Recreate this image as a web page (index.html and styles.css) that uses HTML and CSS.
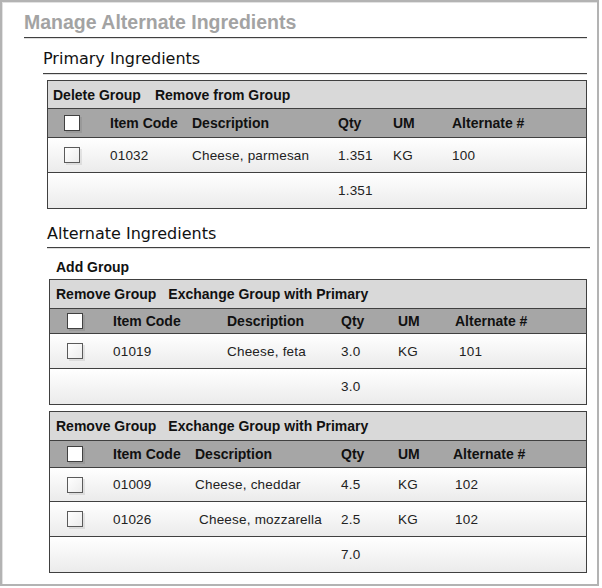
FILE: index.html
```html
<!DOCTYPE html>
<html lang="en">
<head>
  <meta charset="UTF-8">
  <meta name="viewport" content="width=device-width, initial-scale=1.0">
  <title>Manage Alternate Ingredients</title>
  <link rel="stylesheet" href="styles.css">
</head>
<body>
  <div class="frame">
    <h1 class="page-title">Manage Alternate Ingredients</h1>

    <!-- primary group -->
    <section class="primary">
      <h2 class="section-title">Primary Ingredients</h2>
      <div class="group group-primary">
        <div class="toolbar"><span>Delete Group</span><span>Remove from Group</span></div>
        <div class="row head">
          <span class="check"></span><span>Item Code</span><span>Description</span><span>Qty</span><span>UM</span><span>Alternate #</span>
        </div>
        <div class="row item">
          <span class="check"></span><span>01032</span><span>Cheese, parmesan</span><span>1.351</span><span>KG</span><span>100</span>
        </div>
        <div class="row total">
          <span></span><span></span><span></span><span>1.351</span>
        </div>
      </div>
    </section>

    <!-- alternate groups -->
    <section class="alternate">
      <h2 class="section-title">Alternate Ingredients</h2>
      <div class="add-group">Add Group</div>

      <div class="group group-b">
        <div class="toolbar"><span>Remove Group</span><span>Exchange Group with Primary</span></div>
        <div class="row head">
          <span class="check"></span><span>Item Code</span><span>Description</span><span>Qty</span><span>UM</span><span>Alternate #</span>
        </div>
        <div class="row item">
          <span class="check"></span><span>01019</span><span>Cheese, feta</span><span>3.0</span><span>KG</span><span class="nudge">101</span>
        </div>
        <div class="row total">
          <span></span><span></span><span></span><span>3.0</span>
        </div>
      </div>

      <div class="group group-c">
        <div class="toolbar"><span>Remove Group</span><span>Exchange Group with Primary</span></div>
        <div class="row head">
          <span class="check"></span><span>Item Code</span><span>Description</span><span>Qty</span><span>UM</span><span>Alternate #</span>
        </div>
        <div class="row item short">
          <span class="check"></span><span>01009</span><span>Cheese, cheddar</span><span>4.5</span><span>KG</span><span class="nudge-sm">102</span>
        </div>
        <div class="row item">
          <span class="check"></span><span>01026</span><span class="nudge">Cheese, mozzarella</span><span>2.5</span><span>KG</span><span class="nudge-sm">102</span>
        </div>
        <div class="row total">
          <span></span><span></span><span></span><span>7.0</span>
        </div>
      </div>
    </section>
  </div>
</body>
</html>
```

FILE: styles.css
```css
body {
  margin: 0;
  font-family: "Liberation Sans", Arial, sans-serif;
  color: #222;
  background-color: #fff;
}
.frame {
  width: 599px;
  height: 586px;
  box-sizing: border-box;
  border: 2px solid #b3b3b3;
  box-shadow: inset 1px 1px 0 #e2e2e2;
  padding-top: 8px;
}
.page-title {
  margin: 0 10px 0 22px;
  padding-bottom: 3px;
  font-size: 19.5px;
  line-height: 24px;
  font-weight: bold;
  color: #a3a3a3;
  border-bottom: 1px solid #404040;
  box-shadow: 0 1px 0 #dedede;
}
.section-title {
  margin: 0;
  font-family: "DejaVu Sans", sans-serif;
  font-size: 16px;
  line-height: 20px;
  font-weight: normal;
  color: #111;
  border-bottom: 1px solid #404040;
  box-shadow: 0 1px 0 #dedede;
}
.primary {
  margin: 11px 10px 0 41px;
}
.primary .section-title {
  padding-bottom: 4px;
}
.alternate {
  margin: 15px 7px 0 45px;
}
.alternate .section-title {
  padding-bottom: 3px;
}
.add-group {
  margin-top: 11px;
  padding-left: 9px;
  font-size: 14px;
  line-height: 16px;
  font-weight: bold;
  color: #111;
}
.group {
  border: 1px solid #404040;
}
.group-primary {
  margin: 6px 0 0 4px;
}
.group-b {
  margin: 4px 3px 0 2px;
}
.group-c {
  margin: 6px 3px 0 2px;
}
.toolbar {
  display: flex;
  align-items: center;
  gap: 12px;
  height: 28px;
  padding-left: 6px;
  background-color: #d9d9d9;
  border-bottom: 1px solid #404040;
  font-size: 14px;
  font-weight: bold;
  color: #111;
}
.group-primary .toolbar {
  gap: 14px;
  height: 27px;
  padding-left: 5px;
}
.row {
  display: grid;
  align-items: center;
  padding-left: 17px;
  border-bottom: 1px solid #404040;
}
.row:last-child {
  border-bottom: none;
}
.group-primary .row {
  padding-left: 16px;
  grid-template-columns: 46px 82px 146px 55px 59px 1fr;
}
.group-b .row {
  grid-template-columns: 46px 114px 114px 57px 57px 1fr;
}
.group-c .row {
  grid-template-columns: 46px 82px 146px 57px 55px 1fr;
}
.head {
  height: 26px;
  background-color: #a6a6a6;
  font-size: 14px;
  font-weight: bold;
  color: #111;
}
.group-primary .head {
  height: 28px;
}
.group-b .head {
  height: 24px;
}
.item,
.total {
  height: 34px;
  background: linear-gradient(#ffffff, #ebebeb);
  font-size: 13.5px;
  letter-spacing: 0.2px;
  color: #222;
}
.item.short {
  height: 33px;
}
.total {
  height: 35px;
}
.check {
  display: block;
  width: 16px;
  height: 16px;
  box-sizing: border-box;
  border: 1px solid #404040;
  background-color: #fff;
  box-shadow: 2px 2px 0 rgba(0, 0, 0, 0.08);
}
.item .check {
  border-color: #5a5a5a;
  background: linear-gradient(135deg, #ffffff, #ececec);
}
.nudge {
  padding-left: 4px;
}
.nudge-sm {
  padding-left: 2px;
}
```
